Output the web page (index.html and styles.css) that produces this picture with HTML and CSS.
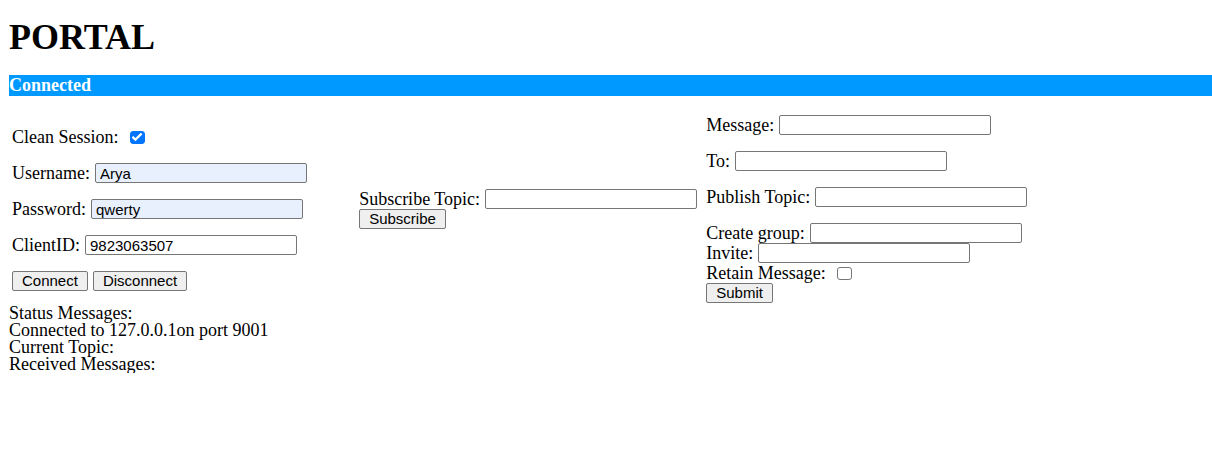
FILE: index.html
```html
<!DOCTYPE html>
<html lang="en">
<head>
<meta charset="utf-8">
<meta name="viewport" content="width=device-width, initial-scale=1">
<title>Portal</title>
<link rel="stylesheet" href="styles.css">
</head>
<body>
<h1 class="title">PORTAL</h1>
<div class="status-bar">Connected</div>
<main class="panels">
  <form class="panel spaced">
    <div class="row"><label for="clean">Clean Session:</label><input class="check" id="clean" type="checkbox" checked></div>
    <div class="row"><label for="username">Username:</label><input class="field filled" id="username" type="text" value="Arya"></div>
    <div class="row"><label for="password">Password:</label><input class="field filled" id="password" type="text" value="qwerty"></div>
    <div class="row"><label for="client">ClientID:</label><input class="field" id="client" type="text" value="9823063507"></div>
    <div class="row"><button class="button" type="button">Connect</button><button class="button" type="button">Disconnect</button></div>
  </form>
  <form class="panel">
    <div class="row"><label for="subscribe">Subscribe Topic:</label><input class="field" id="subscribe" type="text"></div>
    <div class="row"><button class="button" type="button">Subscribe</button></div>
  </form>
  <form class="panel">
    <div class="spaced">
      <div class="row"><label for="message">Message:</label><input class="field" id="message" type="text"></div>
      <div class="row"><label for="to">To:</label><input class="field" id="to" type="text"></div>
      <div class="row"><label for="publish">Publish Topic:</label><input class="field" id="publish" type="text"></div>
      <div class="row"><label for="group">Create group:</label><input class="field" id="group" type="text"></div>
    </div>
    <div class="row"><label for="invite">Invite:</label><input class="field" id="invite" type="text"></div>
    <div class="row"><label for="retain">Retain Message:</label><input class="check" id="retain" type="checkbox"></div>
    <div class="row"><button class="button" type="button">Submit</button></div>
  </form>
</main>
<section class="log">
  <div>Status Messages:</div>
  <div>Connected to 127.0.0.1on port 9001</div>
  <div>Current Topic:</div>
  <div>Received Messages:</div>
</section>
</body>
</html>
```
FILE: styles.css
```css
* {
  box-sizing: border-box;
}

body {
  margin: 0 0 0 9px;
  background: #fff;
  color: #000;
  font-family: "Liberation Serif", "Times New Roman", serif;
  font-size: 18px;
  line-height: 20px;
}

.title {
  margin: 0;
  padding: 17px 0 18px;
  font-size: 36px;
  line-height: 40px;
}

.status-bar {
  height: 21px;
  background: #0099ff;
  color: #fff;
  font-weight: bold;
}

.panels {
  display: grid;
  grid-template-columns: 29% 29% 1fr;
  align-items: center;
  padding: 19px 3px 2px;
}

.spaced {
  display: flex;
  flex-direction: column;
  gap: 16px;
}

.row {
  display: flex;
  align-items: center;
  gap: 5px;
  height: 20px;
  white-space: nowrap;
}

.field,
.button {
  height: 20px;
  border: 1px solid #767676;
  border-radius: 2px;
  color: #000;
  font-family: "Liberation Sans", Arial, sans-serif;
  font-size: 15px;
  line-height: 18px;
}

.field {
  width: 212px;
  padding: 0 4px;
  background: #fff;
}

.filled {
  background: #e8f0fe;
}

.button {
  padding: 0 9px;
  background: #efefef;
}

.check {
  appearance: none;
  display: grid;
  place-items: center;
  width: 15px;
  height: 13px;
  margin: 0 0 0 6px;
  border: 1px solid #767676;
  border-radius: 3px;
  background: #fff;
}

.check:checked {
  border-color: #0075ff;
  background: #0075ff;
}

.check:checked::before {
  content: "";
  width: 11px;
  height: 9px;
  background: #fff;
  clip-path: polygon(0 55%, 16% 38%, 36% 60%, 84% 4%, 100% 20%, 36% 96%);
}

.log {
  line-height: 17px;
}
```
